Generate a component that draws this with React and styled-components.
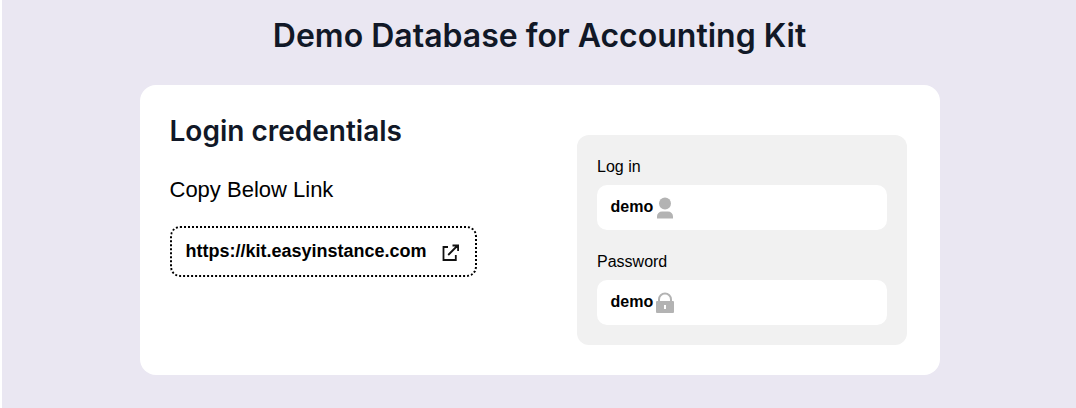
import React from 'react';
import styled, { createGlobalStyle } from 'styled-components';

const GlobalStyle = createGlobalStyle`
  *, *::before, *::after { box-sizing: border-box; }
  body { margin: 0; background: #fff; overflow: hidden; color: #000; font-family: "Liberation Sans", Arial, sans-serif; }
`;

const Page = styled.main`
  margin-left: 2px;
  height: 408px;
  padding: 15px 0 0;
  background: #eae7f2;
  display: flex;
  flex-direction: column;
  align-items: center;
`;

const Title = styled.h1`
  margin: 0 0 29px;
  padding-left: 1px;
  font: 600 32px/41px Inter, sans-serif;
  color: #111827;
  white-space: nowrap;
`;

const Card = styled.section`
  width: 800px;
  height: 290px;
  padding: 30px 33px 30px 30px;
  margin-left: 2px;
  border-radius: 16px;
  background: #fff;
  display: flex;
  justify-content: space-between;
`;

const Intro = styled.div`
  display: flex;
  flex-direction: column;
  align-items: flex-start;
`;

const Heading = styled.h2`
  margin: 0 0 0 -0.5px;
  font: 600 28px/32px Inter, sans-serif;
  color: #111827;
  white-space: nowrap;
`;

const Hint = styled.p`
  margin: 30px 0 23px -0.5px;
  font-size: 22px;
  line-height: 26px;
  white-space: nowrap;
`;

const LinkBox = styled.a`
  width: 307px;
  height: 51px;
  padding: 0 13.5px;
  border: 2px dotted #000;
  border-radius: 10px;
  display: flex;
  align-items: center;
  font-size: 18px;
  font-weight: 700;
  white-space: nowrap;

  svg { margin: 2px 0 0 14.5px; flex: none; }
`;

const Credentials = styled.div`
  width: 330px;
  height: 210px;
  margin-top: 20px;
  padding: 20px;
  border-radius: 12px;
  background: #f1f1f1;
  display: flex;
  flex-direction: column;
  gap: 20px;
`;

const Field = styled.div`
  font-size: 16px;
`;

const Label = styled.div`
  height: 30px;
  line-height: 24px;
`;

const Value = styled.div`
  height: 45px;
  padding: 0 13.5px 2px;
  border-radius: 10px;
  background: #fff;
  display: flex;
  align-items: center;
  font-weight: 700;

  svg { margin: 2px 0 0 1.5px; flex: none; }
`;

const ExternalIcon = () => (
  <svg width="19" height="19" viewBox="0 0 19 19" fill="none" stroke="#111" strokeWidth="1.8">
    <path d="M7 4H2.5v13h12.3v-5M7.2 12 16.6 2.5M11.5 2.5h5.6v5.6" />
  </svg>
);

const UserIcon = () => (
  <svg width="20" height="22" viewBox="0 0 20 22" fill="#b3b3b3">
    <circle cx="10" cy="6.5" r="6" />
    <path d="M2 21.5v-2a5 5 0 0 1 5-5h6a5 5 0 0 1 5 5v2z" />
  </svg>
);

const LockIcon = () => (
  <svg width="20" height="22" viewBox="0 0 20 22" fill="#b3b3b3">
    <path d="M4 10V7.5a6 6 0 0 1 12 0V10" fill="none" stroke="#b3b3b3" strokeWidth="2" />
    <path fillRule="evenodd" d="M2 9h16a1 1 0 0 1 1 1v10a1 1 0 0 1-1 1H2a1 1 0 0 1-1-1V10a1 1 0 0 1 1-1zm7 4v4h2v-4z" />
  </svg>
);

export default function App() {
  return (
    <>
      <GlobalStyle />
      <Page>
        <Title>Demo Database for Accounting Kit</Title>
        <Card>
          <Intro>
            <Heading>Login credentials</Heading>
            <Hint>Copy Below Link</Hint>
            <LinkBox>https://kit.easyinstance.com<ExternalIcon /></LinkBox>
          </Intro>
          <Credentials>
            <Field><Label>Log in</Label><Value>demo<UserIcon /></Value></Field>
            <Field><Label>Password</Label><Value>demo<LockIcon /></Value></Field>
          </Credentials>
        </Card>
      </Page>
    </>
  );
}
